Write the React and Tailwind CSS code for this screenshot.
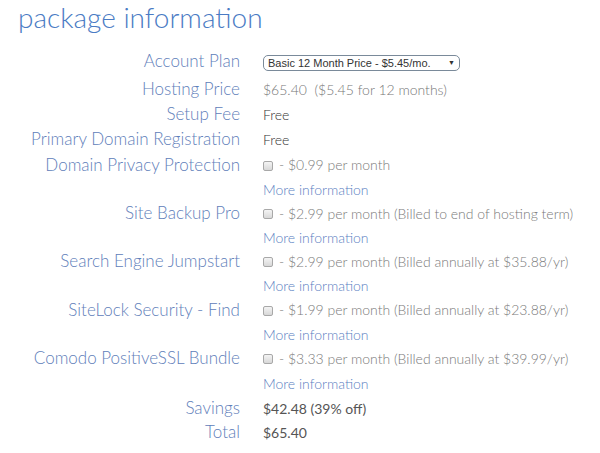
import React from "react";

function Box() {
  return (
    <span className="inline-block w-[10px] h-[10px] rounded-[2px] border border-[#a8a8a8] bg-gradient-to-b from-[#f4f4f4] to-[#d8d8d8] mr-[6px] relative top-[1px]" />
  );
}

function Row({ h, label, children }) {
  return (
    <div className={`flex items-center ${h}`}>
      <div className="w-[222px] text-right text-[17px] font-light text-[#5f80ba] whitespace-nowrap">{label}</div>
      <div className="pl-[23px] whitespace-nowrap">{children}</div>
    </div>
  );
}

function Opt({ children }) {
  return (
    <span className="flex items-center text-[14px] font-light text-[#7a7a7a]">
      <Box />
      {children}
    </span>
  );
}

function More() {
  return <span className="text-[14px] font-light text-[#5a80c2]">More information</span>;
}

export default function App() {
  return (
    <div className="w-[600px] h-[453px] bg-white overflow-hidden pl-[18px]" style={{ fontFamily: "Lato, 'Open Sans', sans-serif" }}>
      <h1 className="h-[47px] pt-[1px] text-[28px] leading-[32px] font-light text-[#4a7bc4]">package information</h1>
      <Row h="h-[28px]" label="Account Plan">
        <span className="inline-flex items-center h-[16px] w-[197px] px-[4px] border border-[#7a8a9a] rounded-[5px] text-[11px] text-[#333] justify-between" style={{ fontFamily: "'Liberation Sans', Arial, sans-serif" }}>
          <span>Basic 12 Month Price - $5.45/mo.</span>
          <span className="text-[7px]">▼</span>
        </span>
      </Row>
      <Row h="h-[27px]" label="Hosting Price">
        <span className="text-[14px] font-light text-[#777]">$65.40&nbsp;&nbsp;($5.45 for 12 months)</span>
      </Row>
      <Row h="h-[24px]" label="Setup Fee">
        <span className="text-[14px] font-light text-[#333]">Free</span>
      </Row>
      <Row h="h-[26px]" label="Primary Domain Registration">
        <span className="text-[14px] font-light text-[#333]">Free</span>
      </Row>
      <Row h="h-[25px]" label="Domain Privacy Protection">
        <Opt>- $0.99 per month</Opt>
      </Row>
      <Row h="h-[24px]" label=""><More /></Row>
      <Row h="h-[24px]" label="Site Backup Pro">
        <Opt>- $2.99 per month (Billed to end of hosting term)</Opt>
      </Row>
      <Row h="h-[24px]" label=""><More /></Row>
      <Row h="h-[24px]" label="Search Engine Jumpstart">
        <Opt>- $2.99 per month (Billed annually at $35.88/yr)</Opt>
      </Row>
      <Row h="h-[24px]" label=""><More /></Row>
      <Row h="h-[25px]" label="SiteLock Security - Find">
        <Opt>- $1.99 per month (Billed annually at $23.88/yr)</Opt>
      </Row>
      <Row h="h-[24px]" label=""><More /></Row>
      <Row h="h-[24px]" label="Comodo PositiveSSL Bundle">
        <Opt>- $3.33 per month (Billed annually at $39.99/yr)</Opt>
      </Row>
      <Row h="h-[25px]" label=""><More /></Row>
      <Row h="h-[25px]" label="Savings">
        <span className="text-[14px] text-[#555]">$42.48 (39% off)</span>
      </Row>
      <Row h="h-[24px]" label="Total">
        <span className="text-[14px] text-[#555]">$65.40</span>
      </Row>
    </div>
  );
}
